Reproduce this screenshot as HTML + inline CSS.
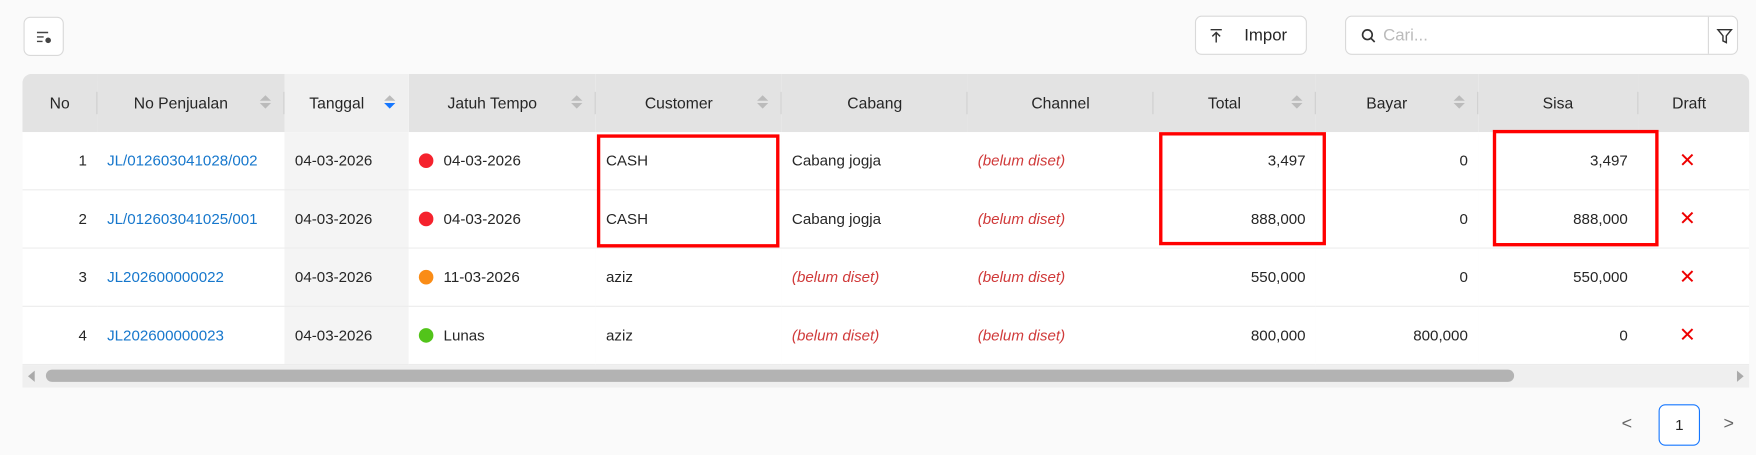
<!DOCTYPE html><html><head><style>
body{margin:0;width:1756px;height:455px;background:#fafafa;font-family:"Liberation Sans",sans-serif;font-size:13.5px;color:#262626;position:relative;overflow:hidden}
#w{position:absolute;left:0;top:0;width:1568px;height:406px;transform:scale(1.1199);transform-origin:0 0}
.abs{position:absolute}
.btn{position:absolute;border:1px solid #d9d9d9;border-radius:6px;background:#fff;box-sizing:border-box}
table{position:absolute;left:20px;top:66px;border-collapse:collapse;table-layout:fixed}
th{background:#e3e3e3;font-weight:normal;height:52px;padding:0 12px;position:relative;font-size:14px}
th:first-child{border-top-left-radius:8px}
td{background:#fff;height:51px;border-bottom:1px solid #ececec;padding:0 9px;white-space:nowrap}
.sep:after{content:"";position:absolute;right:0;top:16px;height:20px;width:1px;background:#cfcfcf}
.tg{background:#f4f4f4!important}th.tg{background:#f0f0f0!important}
.r{text-align:right}.c{text-align:center}
a{color:#1677cc;text-decoration:none}
.it{color:#d03a3a;font-style:italic}
.dot{display:inline-block;width:13px;height:13px;border-radius:50%;vertical-align:-2px;margin-right:9px}
.x{color:#e00;font-size:18px}
.sort{position:absolute;right:14px;top:19px;width:8px}
.sort i{display:block;width:0;height:0;border-left:5px solid transparent;border-right:5px solid transparent;margin-bottom:2px}
.up{border-bottom:5px solid #bbb}.dn{border-top:5px solid #bbb}
.box{position:absolute;border:3px solid #f00;box-sizing:border-box}
</style></head><body><div id="w">
<div class="btn" style="left:21px;top:15px;width:36px;height:35px"><svg width="36" height="35" viewBox="0 0 36 35"><path d="M11 13h10M11 17h6M11 21h5" stroke="#444" stroke-width="1.3"/><circle cx="21" cy="20" r="2.5" fill="#444"/></svg></div>
<div class="btn" style="left:1067px;top:14px;width:100px;height:35px;line-height:33px;padding-left:43px;font-size:15px"><svg class="abs" style="left:12px;top:10px" width="12" height="14"><path d="M1 1.5h10M6 13V4M2.5 7.5L6 4l3.5 3.5" stroke="#333" fill="none" stroke-width="1.3"/></svg>Impor</div>
<div class="btn" style="left:1201px;top:14px;width:351px;height:35px"><svg class="abs" style="left:13px;top:10px" width="14" height="14"><circle cx="6" cy="6" r="4.3" stroke="#333" fill="none" stroke-width="1.5"/><path d="M9 9l3.5 3.5" stroke="#333" stroke-width="1.5"/></svg><span class="abs" style="left:33px;top:8px;color:#bbb;font-size:15px">Cari...</span><div class="abs" style="left:323px;top:0;width:1px;height:33px;background:#d9d9d9"></div><svg class="abs" style="left:330px;top:9px" width="16" height="16"><path d="M2 2.5h12l-4.5 5.5v6l-3-1.5V8z" stroke="#333" fill="none" stroke-width="1.3"/></svg></div>
<div class="abs" style="left:20px;top:66px;width:1542px;height:280px;overflow:hidden;border-radius:8px 8px 0 0">
<table style="left:0;top:0">
<colgroup><col width="67"><col width="168"><col width="111"><col width="168"><col width="167"><col width="167"><col width="167"><col width="146"><col width="146"><col width="144"><col width="100"></colgroup>
<tr><th class="c sep">No</th><th class="c sep" style="padding-right:30px">No Penjualan<span class="sort"><i class="up"></i><i class="dn"></i></span></th><th class="c tg" style="padding-right:30px">Tanggal<span class="sort"><i class="up"></i><i class="dn" style="border-top-color:#1677ff"></i></span></th><th class="c sep" style="padding-right:30px">Jatuh Tempo<span class="sort"><i class="up"></i><i class="dn"></i></span></th><th class="c sep" style="padding-right:30px">Customer<span class="sort"><i class="up"></i><i class="dn"></i></span></th><th class="c sep">Cabang</th><th class="c sep">Channel</th><th class="c sep" style="padding-right:30px">Total<span class="sort"><i class="up"></i><i class="dn"></i></span></th><th class="c sep" style="padding-right:30px">Bayar<span class="sort"><i class="up"></i><i class="dn"></i></span></th><th class="c sep">Sisa</th><th class="c" style="padding-right:20px">Draft</th></tr>
<tr><td class="r">1</td><td><a>JL/012603041028/002</a></td><td class="tg">04-03-2026</td><td><span class="dot" style="background:#f5222d"></span>04-03-2026</td><td>CASH</td><td>Cabang jogja</td><td class="it">(belum diset)</td><td class="r">3,497</td><td class="r">0</td><td class="r">3,497</td><td class="c x" style="padding-right:20px">✕</td></tr>
<tr><td class="r">2</td><td><a>JL/012603041025/001</a></td><td class="tg">04-03-2026</td><td><span class="dot" style="background:#f5222d"></span>04-03-2026</td><td>CASH</td><td>Cabang jogja</td><td class="it">(belum diset)</td><td class="r">888,000</td><td class="r">0</td><td class="r">888,000</td><td class="c x" style="padding-right:20px">✕</td></tr>
<tr><td class="r">3</td><td><a>JL202600000022</a></td><td class="tg">04-03-2026</td><td><span class="dot" style="background:#fa8c16"></span>11-03-2026</td><td>aziz</td><td class="it">(belum diset)</td><td class="it">(belum diset)</td><td class="r">550,000</td><td class="r">0</td><td class="r">550,000</td><td class="c x" style="padding-right:20px">✕</td></tr>
<tr><td class="r">4</td><td><a>JL202600000023</a></td><td class="tg">04-03-2026</td><td><span class="dot" style="background:#52c41a"></span>Lunas</td><td>aziz</td><td class="it">(belum diset)</td><td class="it">(belum diset)</td><td class="r">800,000</td><td class="r">800,000</td><td class="r">0</td><td class="c x" style="padding-right:20px">✕</td></tr>
</table>
<div class="abs" style="left:0;top:260px;width:1542px;height:20px;background:#efefef"></div>
<div class="abs" style="left:21px;top:264px;width:1311px;height:11px;border-radius:6px;background:#b3b3b3"></div>
<div class="abs" style="left:5px;top:265px;border-right:6px solid #aaa;border-top:5px solid transparent;border-bottom:5px solid transparent"></div>
<div class="abs" style="left:1531px;top:265px;border-left:6px solid #aaa;border-top:5px solid transparent;border-bottom:5px solid transparent"></div>
</div>
<div class="box" style="left:533px;top:120px;width:163px;height:101px"></div>
<div class="box" style="left:1035px;top:118px;width:149px;height:101px"></div>
<div class="box" style="left:1333px;top:116px;width:148px;height:104px"></div>
<div class="abs" style="left:1448px;top:370px;color:#666;font-size:16px">&lt;</div>
<div class="btn" style="left:1481px;top:361px;width:37px;height:37px;border-color:#1677ff;text-align:center;line-height:35px">1</div>
<div class="abs" style="left:1539px;top:370px;color:#666;font-size:16px">&gt;</div>
</div></body></html>
